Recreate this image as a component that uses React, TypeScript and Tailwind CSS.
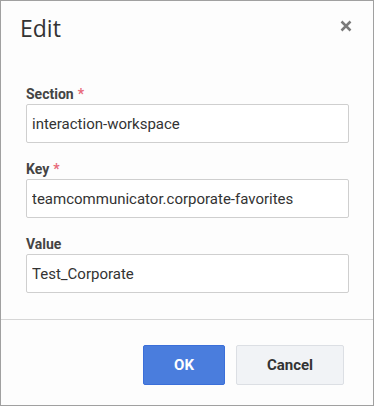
import React from 'react';

interface FieldProps {
  label: string;
  value: string;
  required?: boolean;
}

const Field: React.FC<FieldProps> = ({ label, value, required }) => (
  <div className="flex flex-col">
    <label className="h-[20px] text-[14px] leading-[20px] font-bold text-[#444]">
      {label}
      {required && <span className="ml-[4px] text-[#e8697a]">*</span>}
    </label>
    <input
      readOnly
      value={value}
      className="h-[39px] w-[323px] rounded-[2px] border border-[#cfcfcf] bg-white px-[5px] text-[15px] text-[#333] outline-none"
    />
  </div>
);

export default function App() {
  return (
    <div
      className="flex h-[406px] w-[374px] flex-col border border-[#a0a0a0] bg-[#fdfdfd]"
      style={{ fontFamily: 'Roboto, "Liberation Sans", sans-serif' }}
    >
      {/* header */}
      <div className="flex h-[64px] items-start justify-between pl-[19px] pr-[20px] pt-[12px]">
        <h2
          className="text-[23px] leading-[30px] font-normal text-[#333]"
          style={{ fontFamily: '"Open Sans", "Noto Sans", sans-serif' }}
        >
          Edit
        </h2>
        <button className="mt-[6px] flex h-[14px] w-[14px] items-center justify-center text-[#7a7a7a]">
          <svg width="12" height="12" viewBox="0 0 12 12">
            <path d="M1.5 1.5 L10.5 10.5 M10.5 1.5 L1.5 10.5" stroke="currentColor" strokeWidth="2.5" />
          </svg>
        </button>
      </div>

      {/* body */}
      <div className="flex flex-col gap-[16px] px-[25px] pt-[19px] pb-[26px]">
        <Field label="Section" value="interaction-workspace" required />
        <Field label="Key" value="teamcommunicator.corporate-favorites" required />
        <Field label="Value" value="Test_Corporate" />
      </div>

      {/* footer */}
      <div className="flex flex-1 items-start justify-end gap-[11px] border-t border-[#d6d6d6] pr-[29px] pt-[25px]">
        <button className="h-[40px] w-[82px] rounded-[2px] border border-[#3b6fd9] bg-[#4a7ddd] text-[15px] font-bold text-white">
          OK
        </button>
        <button className="h-[40px] w-[108px] rounded-[2px] border border-[#dcdfe4] bg-[#f1f3f6] text-[15px] font-bold text-[#333]">
          Cancel
        </button>
      </div>
    </div>
  );
}
